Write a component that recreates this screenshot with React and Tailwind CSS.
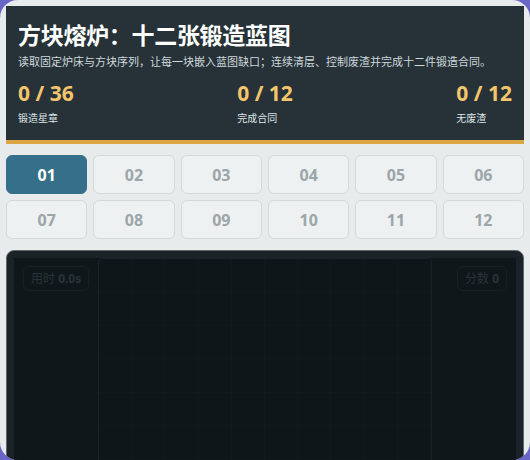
import React from 'react'

const levels = ['01', '02', '03', '04', '05', '06', '07', '08', '09', '10', '11', '12']

const stats = [
  { value: '0 / 36', label: '锻造星章' },
  { value: '0 / 12', label: '完成合同' },
  { value: '0 / 12', label: '无废渣' },
]

// 10 x 7 hearth cells drawn as faint grid
const cells = Array.from({ length: 70 }, (_, i) => i)

export default function App() {
  return (
    <div className="min-h-screen bg-[#6a66c8] font-['Noto_Sans','Noto_Sans_CJK_SC',sans-serif]">
      <div className="h-[460px] overflow-hidden rounded-[18px] bg-[#e7ebeb] p-[6px]">
        <header className="border-b-4 border-[#dba543] bg-[#263238] px-3 pb-[15px] pt-[14px] text-white">
          <h1 className="text-[23px] font-bold leading-[30px] tracking-[-0.3px]">方块熔炉：十二张锻造蓝图</h1>
          <p className="mt-[4px] text-[11px] leading-[16px] text-[#cfd8dc]">
            读取固定炉床与方块序列，让每一块嵌入蓝图缺口；连续清层、控制废渣并完成十二件锻造合同。
          </p>
          <div className="mt-[10px] flex justify-between">
            {stats.map((s) => (
              <div key={s.label}>
                <div className="text-[21px] font-bold leading-[26px] text-[#f4c56c]">{s.value}</div>
                <div className="mt-[5px] text-[10px] leading-[14px] text-[#dfe6e8]">{s.label}</div>
              </div>
            ))}
          </div>
        </header>

        <div className="mt-[11px] grid grid-cols-6 gap-[6px]">
          {levels.map((n, i) => (
            <button
              key={n}
              className={
                i === 0
                  ? 'h-[39px] rounded-[6px] border border-[#366f8a] bg-[#366f8a] text-[16px] font-bold text-white'
                  : 'h-[39px] rounded-[6px] border border-[#d2dada] bg-[#eef1f1] text-[16px] font-bold text-[#9ba6a9]'
              }
            >
              {n}
            </button>
          ))}
        </div>

        <div className="mt-[11px] h-[240px] rounded-[8px] border border-[#5f696d] bg-[#1b2228] p-[7px]">
          <div className="relative flex h-full justify-center bg-[#10171a]">
            <div className="grid h-full w-[334px] grid-cols-10 content-start overflow-hidden rounded-t-[4px] border border-[#1a2327] bg-[#0f1619]">
              {cells.map((c) => (
                <div key={c} className="h-[33.4px] border-b border-r border-[#11191c]" />
              ))}
            </div>
            <div className="absolute left-[9px] top-[8px] rounded-[6px] border border-[#172024] px-[7px] py-[3px] text-[12px] leading-[17px] text-[#29343a]">
              用时 <span className="font-bold">0.0s</span>
            </div>
            <div className="absolute right-[9px] top-[8px] rounded-[6px] border border-[#172024] px-[7px] py-[3px] text-[12px] leading-[17px] text-[#29343a]">
              分数 <span className="font-bold">0</span>
            </div>
          </div>
        </div>
      </div>
    </div>
  )
}
